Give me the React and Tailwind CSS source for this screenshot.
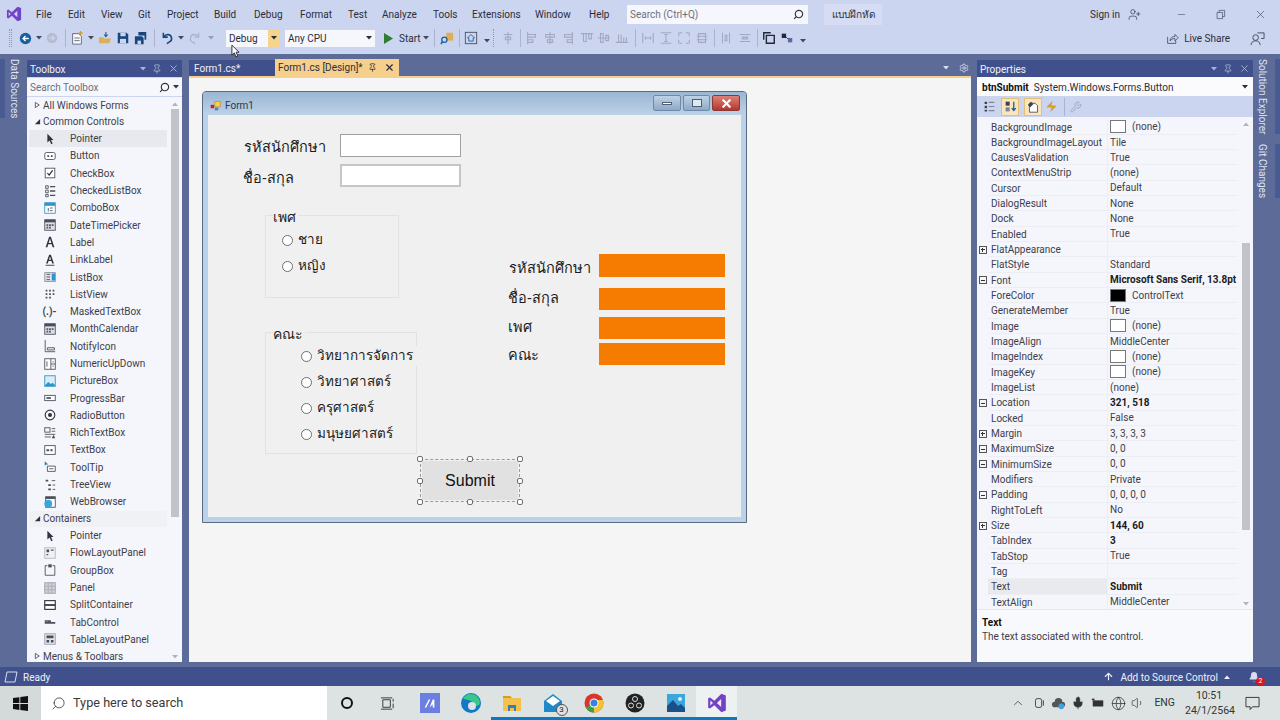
import {
  ArrowUp, Bell, ChevronUp, Globe, Mic, Minus, Pin, Search, Settings, UserPlus, Volume1, Wrench, X, Zap,
} from "lucide-react"

const thai = "font-['Liberation_Sans','Noto_Sans','DejaVu_Sans',sans-serif]"

const menus = [
  ["File", 32], ["Edit", 33], ["View", 37], ["Git", 29], ["Project", 47], ["Build", 40], ["Debug", 46],
  ["Format", 48], ["Test", 34], ["Analyze", 51], ["Tools", 39], ["Extensions", 63], ["Window", 54], ["Help", 38],
]

const commonControls = [
  "Pointer", "Button", "CheckBox", "CheckedListBox", "ComboBox", "DateTimePicker", "Label", "LinkLabel", "ListBox",
  "ListView", "MaskedTextBox", "MonthCalendar", "NotifyIcon", "NumericUpDown", "PictureBox", "ProgressBar",
  "RadioButton", "RichTextBox", "TextBox", "ToolTip", "TreeView", "WebBrowser",
]

const containers = ["Pointer", "FlowLayoutPanel", "GroupBox", "Panel", "SplitContainer", "TabControl", "TableLayoutPanel"]

const props = [
  { n: "BackgroundImage", v: "(none)", swatch: "white" },
  { n: "BackgroundImageLayout", v: "Tile" },
  { n: "CausesValidation", v: "True" },
  { n: "ContextMenuStrip", v: "(none)" },
  { n: "Cursor", v: "Default" },
  { n: "DialogResult", v: "None" },
  { n: "Dock", v: "None" },
  { n: "Enabled", v: "True" },
  { n: "FlatAppearance", v: "", plus: true },
  { n: "FlatStyle", v: "Standard" },
  { n: "Font", v: "Microsoft Sans Serif, 13.8pt", bold: true, minus: true },
  { n: "ForeColor", v: "ControlText", swatch: "black" },
  { n: "GenerateMember", v: "True" },
  { n: "Image", v: "(none)", swatch: "white" },
  { n: "ImageAlign", v: "MiddleCenter" },
  { n: "ImageIndex", v: "(none)", swatch: "white" },
  { n: "ImageKey", v: "(none)", swatch: "white" },
  { n: "ImageList", v: "(none)" },
  { n: "Location", v: "321, 518", bold: true, minus: true },
  { n: "Locked", v: "False" },
  { n: "Margin", v: "3, 3, 3, 3", plus: true },
  { n: "MaximumSize", v: "0, 0", minus: true },
  { n: "MinimumSize", v: "0, 0", minus: true },
  { n: "Modifiers", v: "Private" },
  { n: "Padding", v: "0, 0, 0, 0", minus: true },
  { n: "RightToLeft", v: "No" },
  { n: "Size", v: "144, 60", bold: true, plus: true },
  { n: "TabIndex", v: "3", bold: true },
  { n: "TabStop", v: "True" },
  { n: "Tag", v: "" },
  { n: "Text", v: "Submit", bold: true, selected: true },
  { n: "TextAlign", v: "MiddleCenter" },
]

function Svg({ children, size = 14, className = "" }) {
  return (
    <svg viewBox="0 0 16 16" width={size} height={size} className={className}>
      {children}
    </svg>
  )
}

function Caret({ className = "" }) {
  return (
    <svg viewBox="0 0 6 4" width="6" height="4" className={className}>
      <path d="M0 0h6L3 3.5z" fill="currentColor" />
    </svg>
  )
}

function VsLogo({ size = 16 }) {
  return (
    <svg viewBox="0 0 24 24" width={size} height={size}>
      <path
        d="M17.3 1 8.8 9.3 3.6 5.3 1.4 6.4v11.2l2.2 1.1 5.2-4L17.3 23l5.3-2.1V3.1zM4 15V9l3.2 3zm13 1.8L11.9 12 17 7.2z"
        fill="#7442c8"
      />
    </svg>
  )
}

function ToolIcon({ name }) {
  const c = "#4a4f5c"
  switch (name) {
    case "Pointer":
      return <Svg><path d="M5 2v10l2.6-2.4L9.4 14l1.6-.8-1.8-4H12z" fill="#2f3340" /></Svg>
    case "Button":
      return <Svg><rect x="2" y="4" width="12" height="8" rx="2" fill="#fff" stroke={c} /><path d="M5 7h2v2H5zM9 6v3h2V7H9z" fill={c} /></Svg>
    case "CheckBox":
      return <Svg><rect x="2.5" y="2.5" width="11" height="11" fill="#fff" stroke={c} /><path d="m5 8 2 2.5L11 5" fill="none" stroke="#222" strokeWidth="1.3" /></Svg>
    case "CheckedListBox":
      return <Svg><path d="M3 2h3v3H3zM3 7h3v3H3zM3 12h3v2.5H3z" fill="none" stroke={c} /><path d="M8 3h6M8 8h6M8 13h6" stroke={c} strokeWidth="1.5" /></Svg>
    case "ComboBox":
      return <Svg><rect x="2" y="2" width="12" height="12" fill="#fff" stroke="#2f95c9" /><path d="M2 2h12v3.5H2z" fill="#2f95c9" /><path d="M6 8v4M8 8h3M8 11h3" stroke={c} /></Svg>
    case "DateTimePicker":
    case "MonthCalendar":
      return <Svg><rect x="2" y="2" width="12" height="12" fill="#dfe1e8" stroke={c} /><path d="M2 2h12v3H2z" fill={c} /><path d="M4 7h2v2H4zM7 7h2v2H7zM10 7h2v2h-2zM4 10h2v2H4zM7 10h2v2H7z" fill={c} /></Svg>
    case "Label":
      return <Svg><path d="M3 14 7 2h2l4 12h-2l-1-3.4H6L5 14zm3.5-5h3L8 4z" fill="#30343f" /></Svg>
    case "LinkLabel":
      return <Svg><path d="M3.5 12 7 2h2l3.5 10h-2l-.8-2.8H6.3L5.500 12zm3.300-4.300h2.400L8 4z" fill="#30343f" /><path d="M3 14h10" stroke="#30343f" /></Svg>
    case "ListBox":
      return <Svg><rect x="2" y="3" width="12" height="10" fill="#dfe1e8" stroke="#8b8f9c" /><path d="M4 5h4M4 8h4M4 11h4" stroke={c} /><path d="M10 4h4v8h-4z" fill="#2f95c9" /></Svg>
    case "ListView":
      return <Svg><path d="M3 3h2v2H3zM7 3h2v2H7zM11 3h2v2h-2zM3 7h2v2H3zM7 7h2v2H7zM11 7h2v2h-2zM3 11h2v2H3zM7 11h2v2H7z" fill={c} /></Svg>
    case "MaskedTextBox":
      return <span className="text-[10px] leading-none font-bold text-[#3c404c]">(.)-</span>
    case "NotifyIcon":
      return <Svg><path d="M2.5 1v13.5H14M5 10h8v2.5H5z" fill="none" stroke={c} /></Svg>
    case "NumericUpDown":
      return <Svg><rect x="2" y="2" width="12" height="12" fill="#fff" stroke={c} /><path d="M9 2v12M9 8h5M4.5 5v6" stroke={c} /><path d="m10.5 6 1-1.5 1 1.5zM10.5 10l1 1.5 1-1.5z" fill={c} /></Svg>
    case "PictureBox":
      return <Svg><rect x="2" y="2" width="12" height="12" fill="#d9edf8" stroke="#2f95c9" /><path d="m2 13 4-4 3 2.5 2-1.5 3 3v1H2z" fill="#2f95c9" /></Svg>
    case "ProgressBar":
      return <Svg><rect x="2" y="5" width="12" height="6" fill="#fff" stroke={c} /><path d="M4 7h5v2H4z" fill={c} /></Svg>
    case "RadioButton":
      return <Svg><circle cx="8" cy="8" r="5.5" fill="none" stroke="#30343f" strokeWidth="1.3" /><circle cx="8" cy="8" r="2.3" fill="#30343f" /></Svg>
    case "RichTextBox":
      return <Svg><rect x="2" y="2" width="6" height="5" fill="none" stroke={c} /><path d="M10 3h4M10 6h4M2 9.5h12M2 12.5h7" stroke={c} /><path d="m10 14 2-4 2 4z" fill={c} /></Svg>
    case "TextBox":
      return <Svg><rect x="2" y="3" width="12" height="10" fill="#fff" stroke={c} /><path d="M4 7h3v2.5H4zM8.5 6v3.5H11V7H8.5z" fill={c} /></Svg>
    case "ToolTip":
      return <Svg><path d="M2 1.5v5L3.500 5H6z" fill="#1b7fb5" /><path d="M5 7h9v6H5z" fill="#fff" stroke={c} /><path d="M7 10h5" stroke={c} /></Svg>
    case "TreeView":
      return <Svg><path d="M3 2h3v2H3zM6 7h3v2H6zM6 12h3v2H6z" fill={c} /><path d="M10 3h4M11 8h3M11 13h3" stroke={c} /></Svg>
    case "WebBrowser":
      return <Svg><rect x="3" y="2" width="11" height="12" fill="#fff" stroke={c} /><path d="M3 2h11v2.5H3z" fill={c} /><circle cx="6" cy="10" r="4.5" fill="#39a6dc" /></Svg>
    case "FlowLayoutPanel":
      return <Svg><rect x="2" y="2" width="12" height="12" fill="#eef0f4" stroke="#b3b6c0" /><path d="M4 4h3v3H4zM9 4h3v1.5H9zM4 9h2v1.5H4z" fill={c} /></Svg>
    case "GroupBox":
      return <Svg><path d="M5 3H2.5v11h11V3H11" fill="none" stroke={c} /><path d="M6 1.5h4V5H6z" fill={c} /></Svg>
    case "Panel":
      return <Svg><rect x="2" y="2" width="12" height="12" fill="#cfd1d8" stroke="#9a9da8" /><path d="M2 6h12M2 10h12M6 2v12M10 2v12" stroke="#a9acb6" /></Svg>
    case "SplitContainer":
      return <Svg><rect x="2" y="3" width="12" height="10" fill="#fff" stroke="#30343f" strokeWidth="1.3" /><path d="M2 7h12v2H2z" fill="#30343f" /></Svg>
    case "TabControl":
      return <Svg><path d="M2 6h7v2h5v2H2z" fill={c} /><path d="M3 7h3v1H3z" fill="#2f95c9" /></Svg>
    default:
      return <Svg><rect x="2" y="2" width="12" height="12" fill="#e3e5ea" stroke="#9a9da8" /><path d="M4 4h8v3H4zM4 9h3v3H4zM9 9h3v3H9z" fill={c} /></Svg>
  }
}

function GrayIcon({ d }) {
  return <Svg><path d={d} fill="none" stroke="#a3a8be" strokeWidth="1.2" /></Svg>
}

function Grip() {
  return <div className="w-[3px] h-[18px] border-x border-dotted border-[#8f97b3]" />
}

function Sep({ className = "" }) {
  return <div className={`w-px h-[18px] bg-[#aab3d0] ${className}`} />
}

function Slot({ className = "", children }) {
  return <div className={`w-[14px] h-[14px] flex items-center justify-center shrink-0 ${className}`}>{children}</div>
}

function DropSlot({ className = "" }) {
  return (
    <div className={`w-[10px] flex justify-center shrink-0 text-[#444a5c] ${className}`}>
      <Caret />
    </div>
  )
}

function TitleBar() {
  return (
    <div className="h-[27px] flex items-center bg-[#ccd5f0] text-[#2a2d38] text-[10px] shrink-0 pt-px">
      <div className="w-[28px] pl-[6px] shrink-0">
        <VsLogo />
      </div>
      <div className="flex items-center w-[599px] shrink-0 pl-[8px] pt-px">
        {menus.map(([label, w]) => (
          <div key={label} className="shrink-0" style={{ width: w }}>
            {label}
          </div>
        ))}
      </div>
      <div className="w-[181px] h-[19px] bg-[#f6f7fc] flex items-center justify-between px-[3px] text-[#6d7180] shrink-0">
        <span>Search (Ctrl+Q)</span>
        <Search size={11} strokeWidth={2.5} className="text-[#30343f] mr-[1px] -scale-x-100" />
      </div>
      <div className={`ml-[16px] w-[58px] h-[21px] flex items-center justify-center bg-[#d5dcf3] shrink-0 ${thai}`}>
        แบบฝึกหัด
      </div>
      <div className="ml-auto flex items-center">
        <span>Sign in</span>
        <UserPlus size={13} strokeWidth={1.2} className="ml-[8px]" />
        <Minus size={11} strokeWidth={1} className="ml-[35px]" />
        <Svg size={11} className="ml-[28px]"><path d="M3 5h8v9H3zM6 5V2h8v9h-3" fill="none" stroke="#444a5c" /></Svg>
        <X size={13} strokeWidth={1} className="ml-[28px] mr-[13px]" />
      </div>
    </div>
  )
}

function Toolbar() {
  return (
    <div className="h-[27px] flex items-center bg-[#ccd5f0] text-[#2a2d38] text-[10px] shrink-0 pb-[5px]">
      <div className="ml-[9px] mr-[5px]"><Grip /></div>
      <Slot className="ml-[1px]">
        <Svg size={13}><circle cx="8" cy="8" r="7" fill="#1b5e9e" /><path d="M12 8H6M8 5 5 8l3 3" fill="none" stroke="#fff" strokeWidth="1.6" /></Svg>
      </Slot>
      <DropSlot className="ml-[2px]" />
      <Slot className="ml-px">
        <Svg size={12}><circle cx="8" cy="8" r="7" fill="#b6bdd2" /><path d="M4 8h6M8 5l3 3-3 3" fill="none" stroke="#ccd5f0" strokeWidth="1.5" /></Svg>
      </Slot>
      <Sep className="ml-[6px]" />
      <Slot className="ml-[4px]">
        <Svg><path d="M3 3h7l3 3v9H3z" fill="#f8f9fd" stroke="#5a6070" /><path d="M12 0v5M9.5 2.5h5" stroke="#c79a2b" strokeWidth="1.3" /><path d="M5 8h6M5 11h6" stroke="#5a6070" /></Svg>
      </Slot>
      <DropSlot className="ml-[2px]" />
      <Slot className="ml-[2px]">
        <Svg><path d="M1 7h5l1 1.5h8L13 14H1z" fill="#dcb05a" /><path d="M9 1v5M7 4l2 2.5L11 4" fill="none" stroke="#1b5e9e" strokeWidth="1.3" /></Svg>
      </Slot>
      <Slot className="ml-[4px]">
        <Svg><path d="M2 2h10l2 2v10H2z" fill="#17477e" /><path d="M5 2h6v4H5z" fill="#ccd5f0" /><path d="M4.5 9h7v5h-7z" fill="#ccd5f0" /></Svg>
      </Slot>
      <Slot className="ml-[4px]">
        <Svg><path d="M5 1h9v9h-2V5H5z" fill="#17477e" /><path d="M1 6h8l2 2v7H1z" fill="#17477e" /><path d="M4 11h4v4H4z" fill="#ccd5f0" /></Svg>
      </Slot>
      <Sep className="ml-[6px]" />
      <Slot className="ml-[4px]">
        <Svg><path d="M5 2v5h5M5 7c1.5-2 3-3 5-3a4.5 4.5 0 0 1 1.5 8.7L9 14.5" fill="none" stroke="#17477e" strokeWidth="1.8" /></Svg>
      </Slot>
      <DropSlot className="ml-[3px]" />
      <Slot className="ml-[3px]">
        <Svg><path d="M11 2v5H6M11 7C9.5 5 8 4 6 4a4.5 4.5 0 0 0-1.5 8.7L7 14.5" fill="none" stroke="#aeb4c8" strokeWidth="1.5" /></Svg>
      </Slot>
      <DropSlot className="ml-[3px] opacity-40" />

      {/* solution config dropdowns */}
      <div className="ml-[10px] w-[53px] h-[17px] flex bg-[#f6f7fc] shrink-0">
        <span className="flex-1 pl-[3px] leading-[17px]">Debug</span>
        <div className="w-[11px] bg-[#f5d48d] flex items-center justify-center">
          <Caret />
        </div>
      </div>
      <div className="ml-[6px] w-[90px] h-[17px] flex items-center justify-between bg-[#f6f7fc] px-[3px] shrink-0">
        <span>Any CPU</span>
        <Caret />
      </div>
      <Slot className="ml-[6px]">
        <svg viewBox="0 0 10 12" width="9" height="11"><path d="M0 0l10 6-10 6z" fill="#2f7d32" /></svg>
      </Slot>
      <span className="ml-[4px] w-[21px] shrink-0">Start</span>
      <DropSlot className="ml-px" />
      <Sep className="ml-[3px]" />
      <Slot className="ml-[5px]">
        <Svg><path d="M7 2h8v9H7z" fill="#dcb05a" /><circle cx="5" cy="10" r="3" fill="#ccd5f0" stroke="#1b5e9e" strokeWidth="1.4" /><path d="m3 12-2 3" stroke="#1b5e9e" strokeWidth="1.6" /></Svg>
      </Slot>
      <Sep className="ml-[5px]" />
      <Slot className="ml-[4px]">
        <Svg><rect x="1.5" y="1.5" width="13" height="13" fill="none" stroke="#444a5c" /><path d="M8 4 4 8h1.5v3.5h5V8H12z" fill="none" stroke="#1b5e9e" /></Svg>
      </Slot>
      <DropSlot className="ml-[4px] mt-[6px]" />
      <div className="ml-px"><div className="w-[2px] h-[18px] border-l border-dotted border-[#8f97b3]" /></div>

      <Slot className="ml-[6px]"><GrayIcon d="M3 4h10M8 1v14M5 7h6v3H5z" /></Slot>
      <Sep className="ml-[5px]" />
      <Slot className="ml-[4px]"><GrayIcon d="M3 1v14M3 4h9v3H3zM3 10h6v3H3z" /></Slot>
      <Slot className="ml-[4px]"><GrayIcon d="M8 1v14M3 4h10v3H3zM5 10h6v3H5z" /></Slot>
      <Slot className="ml-[4px]"><GrayIcon d="M13 1v14M4 4h9v3H4zM7 10h6v3H7z" /></Slot>
      <Slot className="ml-[5px]"><GrayIcon d="M1 3h14M4 3v9h3V3M10 3v6h3V3" /></Slot>
      <Slot className="ml-[3px]"><GrayIcon d="M1 8h14M4 3v10h3V3zM10 5v6h3V5z" /></Slot>
      <Slot className="ml-[4px]"><GrayIcon d="M1 13h14M4 4v9h3V4M10 7v6h3V7" /></Slot>
      <Sep className="ml-[6px]" />
      <Slot className="ml-[5px]"><GrayIcon d="M2 2v12M14 2v12M5 8h6M5 6v4M11 6v4" /></Slot>
      <Slot className="ml-[4px]"><GrayIcon d="M2 2h12M2 14h12M8 4v8M6 4h4M6 12h4" /></Slot>
      <Slot className="ml-[4px]"><GrayIcon d="M2 2h4M2 2v4M14 2h-4M14 2v4M2 14h4M2 14v-4M14 14h-4M14 14v-4" /></Slot>
      <Slot className="ml-[4px]"><GrayIcon d="M4 3h8v10H4zM2 6h12M2 10h12" /></Slot>
      <Sep className="ml-[5px]" />
      <Slot className="ml-[4px]"><GrayIcon d="M4 2v12M12 2v12M7 5h2v6H7z" /></Slot>
      <Slot className="ml-[5px]"><GrayIcon d="M2 4h12M2 12h12M5 7h6v2H5z" /></Slot>
      <Sep className="ml-[5px]" />
      <Slot className="ml-[4px]">
        <Svg><path d="M5 5h9v9H5z" fill="none" stroke="#22273a" strokeWidth="1.6" /><path d="M2 10V2h8" fill="none" stroke="#22273a" strokeWidth="1.6" /></Svg>
      </Slot>
      <Slot className="ml-[4px]">
        <Svg><path d="M2 3h5v5H2z" fill="#22273a" /><path d="M9 8h5v5H9z" fill="#5a6d9a" /><path d="M7 7l2 2" stroke="#22273a" /></Svg>
      </Slot>
      <DropSlot className="ml-[4px] mt-[6px]" />

      <div className="ml-auto flex items-center">
        <Svg size={13}><path d="M2 6v8h10v-3" fill="none" stroke="#444a5c" /><path d="M5 11c0-4 3-5.500 6-5.500V3l4 4-4 4V8c-2.500 0-4.500 1-6 3z" fill="none" stroke="#444a5c" /></Svg>
        <span className="ml-[5px]">Live Share</span>
        <Svg size={15} className="ml-[20px] mr-[15px]"><circle cx="6" cy="7" r="3" fill="none" stroke="#444a5c" /><path d="M1 15c.5-3 2-4.500 5-4.500s4 1 5 4.500M8 2h7v6h-3" fill="none" stroke="#444a5c" /></Svg>
      </div>
    </div>
  )
}

function PanelHeader({ title }) {
  return (
    <div className="h-[17px] shrink-0 flex items-center bg-[#40508d] text-[#eef0f8] text-[10px] pl-[3px]">
      <span className="pt-[2px]">{title}</span>
      <div className="ml-auto flex items-center text-[#aab4d6]">
        <Caret />
        <Pin size={10} className="ml-[6px]" />
        <X size={11} className="ml-[6px] mr-[3px]" />
      </div>
    </div>
  )
}

function ScrollBar({ thumb }) {
  return (
    <div className="w-[15px] shrink-0 flex flex-col items-center bg-[#f5f6fb] text-[#b0b3bd] pt-[5px] pb-[3px]">
      <Caret className="rotate-180 shrink-0" />
      {thumb}
      <Caret className="mt-auto shrink-0" />
    </div>
  )
}

function ToolRow({ name, selected }) {
  return (
    <div className={`h-[17.3px] flex items-center ${selected ? "bg-[#e8e9ef]" : ""}`}>
      <div className="w-[41px] flex justify-center shrink-0">
        <div className="w-[14px] h-[14px] flex items-center justify-center">
          <ToolIcon name={name} />
        </div>
      </div>
      <span>{name}</span>
    </div>
  )
}

function GroupRow({ open, label, shade }) {
  return (
    <div className={`h-[16.5px] flex items-center pl-[5px] ${shade ? "bg-[#f0f1f5]" : ""}`}>
      {open ? (
        <svg viewBox="0 0 8 8" width="7" height="7"><path d="M7 1v6H1z" fill="#30343f" /></svg>
      ) : (
        <svg viewBox="0 0 8 8" width="7" height="8"><path d="M1.5 1v6L6 4z" fill="none" stroke="#555" /></svg>
      )}
      <span className="ml-[2px]">{label}</span>
    </div>
  )
}

function Toolbox() {
  return (
    <div className="w-[155px] shrink-0 mt-px flex flex-col bg-[#f5f6fb]">
      <PanelHeader title="Toolbox" />
      <div className="h-[20px] shrink-0 flex items-center bg-[#ccd5f0] py-px">
        <div className="w-full h-full bg-[#f6f7fc] flex items-center justify-between px-[3px] text-[10px] text-[#6d7180]">
          <span className="pt-px">Search Toolbox</span>
          <span className="flex items-center gap-[3px] text-[#30343f]">
            <Search size={11} strokeWidth={2.5} className="-scale-x-100" />
            <Caret />
          </span>
        </div>
      </div>
      <div className="flex-1 min-h-0 flex overflow-hidden text-[10px] text-[#3d404b]">
        <div className="flex-1 min-w-0 pl-[2px]">
          <GroupRow label="All Windows Forms" />
          <GroupRow open label="Common Controls" />
          {commonControls.map((name, i) => (
            <ToolRow key={name} name={name} selected={i === 0} />
          ))}
          <GroupRow open shade label="Containers" />
          {containers.map(name => (
            <ToolRow key={name} name={name} />
          ))}
          <GroupRow label="Menus & Toolbars" />
        </div>
        <ScrollBar thumb={<div className="w-[8px] h-[408px] bg-[#c2c3c9] mt-[3px] shrink-0" />} />
      </div>
    </div>
  )
}

function FormLabel({ className, children }) {
  return (
    <div className={`absolute h-[20px] leading-[20px] text-[14.5px] text-[#1c1c1c] whitespace-nowrap ${className}`}>
      {children}
    </div>
  )
}

function Radio({ className, label }) {
  return (
    <div className={`absolute h-[20px] flex items-center gap-[5px] bg-[#f0f0f0] text-[13.5px] text-[#1c1c1c] whitespace-nowrap ${className}`}>
      <span className="w-[11px] h-[11px] rounded-full bg-white border border-[#6f6f6f] shrink-0" />
      <span className="pt-px">{label}</span>
    </div>
  )
}

function Handle({ className }) {
  return <div className={`absolute w-[6px] h-[6px] rounded-[2px] bg-white border border-[#6f6f6f] ${className}`} />
}

function GroupFrame({ className, legend }) {
  return (
    <div className={`absolute border border-[#e2e2e2] ${className}`}>
      <div className="absolute left-[7px] -top-[9px] h-[20px] leading-[20px] bg-[#f0f0f0] pr-[2px] text-[14px] text-[#1c1c1c]">
        {legend}
      </div>
    </div>
  )
}

function DesignerForm() {
  return (
    <div className="w-[545px] h-[432px] flex flex-col border border-[#5e6b7c] rounded-t-[4px] bg-[#b9d1ea]">
      <div className="h-[23px] shrink-0 flex items-center pl-[7px] pr-[6px] pt-[3px] rounded-t-[3px] bg-gradient-to-b from-[#9bb6d3] to-[#bdd2e8]">
        <Svg size={11}>
          <path d="M7 2h8v8H7z" fill="#f6d04d" stroke="#b08a20" />
          <path d="M1 7h5v5H1z" fill="#c8202a" />
          <path d="M7 11h5v4H7z" fill="#4f7fc0" />
        </Svg>
        <span className="ml-[4px] text-[10px] text-[#2e3744]">Form1</span>
        <div className="ml-auto flex items-start gap-[2px] -mt-[4px]">
          <div className="w-[28px] h-[16px] rounded-[2px] border border-[#6e8aa8] bg-gradient-to-b from-[#bed2e6] to-[#8faac6] flex items-center justify-center">
            <div className="w-[10px] h-[3px] bg-white border border-[#4f5f72]" />
          </div>
          <div className="w-[27px] h-[16px] rounded-[2px] border border-[#6e8aa8] bg-gradient-to-b from-[#bed2e6] to-[#8faac6] flex items-center justify-center">
            <div className="w-[10px] h-[8px] bg-[#dfe8f2] border border-[#4f5f72]" />
          </div>
          <div className="w-[28px] h-[16px] rounded-[2px] border border-[#8a3a36] bg-gradient-to-b from-[#dc8077] to-[#b8332a] flex items-center justify-center">
            <X size={13} strokeWidth={4} className="text-white" />
          </div>
        </div>
      </div>

      <div className="flex-1 min-h-0 px-[5px] pb-[5px] flex">
        {/* controls sit where the designer dropped them */}
        <div className={`relative flex-1 bg-[#f0f0f0] ${thai}`}>
          <FormLabel className="left-[36px] top-[22px]">รหัสนักศึกษา</FormLabel>
          <FormLabel className="left-[35px] top-[53px]">ชื่อ-สกุล</FormLabel>
          <div className="absolute left-[132px] top-[19px] w-[121px] h-[23px] bg-white border border-[#a0a0a0]" />
          <div className="absolute left-[132px] top-[49px] w-[121px] h-[23px] bg-white border-2 border-[#c6c6c6]" />

          <GroupFrame className="left-[57px] top-[100px] w-[134px] h-[83px]" legend="เพศ" />
          <Radio className="left-[74px] top-[115px]" label="ชาย" />
          <Radio className="left-[74px] top-[141px]" label="หญิง" />

          <GroupFrame className="left-[57px] top-[217px] w-[152px] h-[122px]" legend="คณะ" />
          <Radio className="left-[93px] top-[231px] w-[118px]" label="วิทยาการจัดการ" />
          <Radio className="left-[93px] top-[257px]" label="วิทยาศาสตร์" />
          <Radio className="left-[93px] top-[283px]" label="ครุศาสตร์" />
          <Radio className="left-[93px] top-[309px]" label="มนุษยศาสตร์" />

          <FormLabel className="left-[301px] top-[143px]">รหัสนักศึกษา</FormLabel>
          <FormLabel className="left-[300px] top-[173px]">ชื่อ-สกุล</FormLabel>
          <FormLabel className="left-[300px] top-[202px]">เพศ</FormLabel>
          <FormLabel className="left-[300px] top-[230px]">คณะ</FormLabel>
          <div className="absolute left-[391px] top-[139px] w-[126px] h-[23px] bg-[#f57c00]" />
          <div className="absolute left-[391px] top-[173px] w-[126px] h-[22px] bg-[#f57c00]" />
          <div className="absolute left-[391px] top-[202px] w-[126px] h-[22px] bg-[#f57c00]" />
          <div className="absolute left-[391px] top-[228px] w-[126px] h-[22px] bg-[#f57c00]" />

          <div className="absolute left-[212px] top-[344px] w-[100px] h-[43px] border border-dashed border-[#9a9a9a] flex items-center justify-center">
            <div className="w-[96px] h-[39px] bg-[#e1e1e1] flex items-center justify-center font-['Liberation_Sans',sans-serif] text-[16px] text-[#111]">
              Submit
            </div>
            <Handle className="-left-[4px] -top-[4px]" />
            <Handle className="left-[46px] -top-[4px]" />
            <Handle className="-right-[4px] -top-[4px]" />
            <Handle className="-left-[4px] top-[18px]" />
            <Handle className="-right-[4px] top-[18px]" />
            <Handle className="-left-[4px] -bottom-[4px]" />
            <Handle className="left-[46px] -bottom-[4px]" />
            <Handle className="-right-[4px] -bottom-[4px]" />
          </div>
        </div>
      </div>
    </div>
  )
}

function DocumentArea() {
  return (
    <div className="w-[782px] shrink-0 ml-[7px] flex flex-col">
      <div className="h-[17px] shrink-0 flex items-end text-[10px] whitespace-nowrap">
        <div className="w-[86px] h-[16px] bg-[#40508d] text-[#eef0f8] pl-[5px] leading-[17px]">Form1.cs*</div>
        <div className="w-[124px] h-[17px] bg-[#f6cf8c] text-[#2a2d38] flex items-center pl-[3px]">
          <span>Form1.cs [Design]*</span>
          <Pin size={9} className="ml-auto" />
          <X size={11} strokeWidth={2.5} className="ml-[7px] mr-[4px]" />
        </div>
        <div className="ml-auto self-center flex items-center text-[#d7dcee]">
          <Caret />
          <Settings size={10} className="ml-[10px] mr-[2px]" />
        </div>
      </div>
      <div className="h-[2px] shrink-0 bg-[#f6cf8c]" />
      <div className="flex-1 min-h-0 bg-[#f5f5f5] pl-[13px] pt-[13px]">
        <DesignerForm />
      </div>
    </div>
  )
}

function PlusBox({ open }) {
  return (
    <div className="w-[8px] h-[8px] border border-[#555] flex items-center justify-center relative">
      <div className="w-[4px] h-px bg-[#333]" />
      {open && <div className="absolute w-px h-[4px] bg-[#333]" />}
    </div>
  )
}

function PropRow({ p }) {
  return (
    <div className="h-[15.33px] flex items-center">
      <div className="w-[11px] h-full shrink-0 flex items-center justify-center">
        {(p.plus || p.minus) && <PlusBox open={p.plus} />}
      </div>
      <div className={`w-[120px] h-full shrink-0 pl-[3px] leading-[15px] border-b border-r border-[#eceef4] whitespace-nowrap ${p.selected ? "bg-[#e9eaee]" : ""}`}>
        {p.n}
      </div>
      <div className={`flex-1 min-w-0 h-full flex items-center pl-[2px] border-b border-[#eceef4] whitespace-nowrap ${p.bold ? "font-bold text-[#1c1c1c]" : ""}`}>
        {p.swatch && (
          <span className={`w-[16px] h-[13px] mr-[6px] shrink-0 border border-[#777] ${p.swatch === "black" ? "bg-black" : "bg-white"}`} />
        )}
        {p.v}
      </div>
    </div>
  )
}

function Properties() {
  return (
    <div className="w-[276px] shrink-0 ml-[6px] mt-px flex flex-col bg-[#f5f6fb]">
      <PanelHeader title="Properties" />
      <div className="h-[19px] shrink-0 bg-[#fbfbfe] flex items-center px-[5px] pt-px text-[10px] text-[#2a2d38]">
        <span className="font-bold text-[#111]">btnSubmit</span>
        <span className="ml-[5px]">System.Windows.Forms.Button</span>
        <Caret className="ml-auto" />
      </div>
      <div className="h-[21px] shrink-0 bg-[#ccd5f0] flex items-center pl-[5px]">
        <Slot>
          <Svg size={13}><path d="M2 2h3v3H2zM2 7h3v3H2zM2 12h3v2H2z" fill="#3e4250" /><path d="M7 3h7M7 8h7M7 13h7" stroke="#7e8496" strokeWidth="1.5" /></Svg>
        </Slot>
        <div className="ml-[5px] w-[18px] h-[18px] bg-[#f9e6bf] border border-[#e3c078] flex items-center justify-center">
          <Svg size={13}><path d="M2 2h5v5H2z" fill="#3e4250" /><path d="M2 9h5v5H2z" fill="#7e8496" /><path d="M12 2v11M9.5 10l2.5 3 2.5-3" fill="none" stroke="#1b5e9e" strokeWidth="1.6" /></Svg>
        </div>
        <div className="ml-[5px] w-[18px] h-[18px] bg-[#f9e6bf] border border-[#e3c078] flex items-center justify-center">
          <Svg size={13}><path d="M3 4h7l3 3v8H3z" fill="#fff" stroke="#3e4250" /><path d="M1 6l4-4 3 3-4 4z" fill="#3e4250" /></Svg>
        </div>
        <Zap size={13} fill="#d9a227" strokeWidth={0} className="ml-[3px]" />
        <Sep className="ml-[6px]" />
        <Wrench size={12} className="ml-[5px] text-[#a3a8be]" />
      </div>
      <div className="flex-1 min-h-0 flex overflow-hidden text-[10px] text-[#3d404b]">
        <div className="flex-1 min-w-0 pt-[2.5px] overflow-hidden">
          {props.map(p => (
            <PropRow key={p.n} p={p} />
          ))}
        </div>
        <ScrollBar thumb={<div className="w-[8px] h-[287px] bg-[#c2c3c9] mt-[117px] shrink-0" />} />
      </div>
      <div className="h-[53px] shrink-0 bg-[#f8f9fd] border-t border-[#e6e8f0] px-[5px] pt-[6px] text-[10px] text-[#3d404b]">
        <div className="font-bold text-[#111] leading-[14px]">Text</div>
        <div className="leading-[14px]">The text associated with the control.</div>
      </div>
    </div>
  )
}

function StatusBar() {
  return (
    <div className="h-[19px] shrink-0 bg-[#40508d] text-[#eef0f8] text-[10px] flex items-center pl-[4px]">
      <svg viewBox="0 0 14 12" width="14" height="12"><path d="M3 1h10l-2 10H1z" fill="none" stroke="#d7dcee" /></svg>
      <span className="ml-[5px] pt-[2px]">Ready</span>
      <div className="ml-auto flex items-center">
        <ArrowUp size={11} strokeWidth={2.5} />
        <span className="ml-[6px] pt-[2px]">Add to Source Control</span>
        <Caret className="ml-[6px] rotate-180" />
        <div className="relative ml-[18px] mr-[20px]">
          <Bell size={12} fill="#d7dcee" strokeWidth={0} />
          <span className="absolute -right-[5px] -bottom-[3px] w-[9px] h-[9px] rounded-full bg-[#d8151b] text-white text-[7px] leading-[9px] text-center">2</span>
        </div>
      </div>
    </div>
  )
}

function TaskIcon({ active, on, className = "", children }) {
  return (
    <div className={`w-[41px] h-full flex items-center justify-center relative shrink-0 ${active ? "bg-[#eef1f1]" : ""} ${className}`}>
      {children}
      {on && <div className="absolute bottom-0 left-0 right-0 h-[3px] bg-[#0a78c2]" />}
    </div>
  )
}

function Taskbar() {
  return (
    <div className="h-[34px] shrink-0 bg-[#dde3e2] flex items-stretch text-[#222]">
      <div className="w-[41px] bg-[#d3dad9] flex items-center justify-center shrink-0">
        <svg viewBox="0 0 16 16" width="15" height="15">
          <path d="M0 2.2 6.8 1.2v6.300H0zM7.800 1 16 0v7.500H7.800zM0 8.500h6.800v6.300L0 13.800zM7.800 8.500H16V16l-8.200-1.100z" fill="#111" />
        </svg>
      </div>
      <div className="w-[286px] bg-white flex items-center pl-[10px] text-[12.7px] text-[#3a3a3a] shrink-0">
        <Search size={15} strokeWidth={1.3} className="-scale-x-100" />
        <span className="ml-[7px]">Type here to search</span>
      </div>
      <div className="w-[40px] flex items-center justify-center shrink-0">
        <div className="w-[12px] h-[12px] rounded-full border-2 border-[#111]" />
      </div>
      <div className="w-[40px] flex items-center justify-center shrink-0">
        <Svg size={15}><path d="M3 4h8v8H3zM1 2h12M1 14h12M14 3v3M14 8v5" fill="none" stroke="#333" /></Svg>
      </div>
      <TaskIcon className="ml-[2px]">
        <div className="w-[20px] h-[20px] bg-[#6a7fe0] flex items-center justify-center">
          <Svg size={13}><path d="M2 13 7 3h2L4 13zM8 13l4-10h2v10h-2V9z" fill="#fff" /></Svg>
        </div>
      </TaskIcon>
      <TaskIcon>
        <svg viewBox="0 0 20 20" width="20" height="20">
          <circle cx="10" cy="10" r="10" fill="#1278c8" />
          <path d="M2 6c2-5 8-6 12-4s5 6 5 8c0 2-2 3-5 3-3 0-3-1-2-3-1-3-9-4-10-4z" fill="#37c88a" />
          <circle cx="11" cy="13" r="4" fill="#dde3e2" />
        </svg>
      </TaskIcon>
      <TaskIcon on>
        <svg viewBox="0 0 20 20" width="20" height="20">
          <path d="M1 3h7l2 2h9v13H1z" fill="#f2c14e" />
          <path d="M1 3h7l2 2H1z" fill="#d79b1e" />
          <path d="M6 12h8v6h-2v-3H8v3H6z" fill="#2f7fb8" />
        </svg>
      </TaskIcon>
      <TaskIcon on>
        <div className="relative">
          <svg viewBox="0 0 20 20" width="20" height="20">
            <path d="M1 8 10 1l9 7v11H1z" fill="#1e88c9" />
            <path d="m3 8 7-5 7 5-7 5z" fill="#fff" />
          </svg>
          <span className="absolute -right-[5px] -bottom-[3px] w-[12px] h-[12px] rounded-full bg-[#dde3e2] border border-[#555] text-[8px] leading-[10px] text-center">3</span>
        </div>
      </TaskIcon>
      <TaskIcon on>
        <svg viewBox="0 0 20 20" width="20" height="20">
          <circle cx="10" cy="10" r="9.5" fill="#d9362b" />
          <path d="M10 10 1.800 14.500A9.500 9.500 0 0 0 10 19.500z" fill="#3aa14a" />
          <path d="M10 10v9.500A9.500 9.500 0 0 0 19 7H10z" fill="#f2c230" />
          <circle cx="10" cy="10" r="4.5" fill="#fff" />
          <circle cx="10" cy="10" r="3.5" fill="#3b7fe0" />
        </svg>
      </TaskIcon>
      <TaskIcon on>
        <svg viewBox="0 0 20 20" width="20" height="20">
          <circle cx="10" cy="10" r="9.5" fill="#222" />
          <circle cx="10" cy="6" r="2.5" fill="none" stroke="#ddd" />
          <circle cx="6" cy="12.5" r="2.5" fill="none" stroke="#ddd" />
          <circle cx="14" cy="12.5" r="2.5" fill="none" stroke="#ddd" />
        </svg>
      </TaskIcon>
      <TaskIcon on>
        <svg viewBox="0 0 20 20" width="20" height="20">
          <path d="M1 1h18v18H1z" fill="#39a6dc" />
          <path d="M1 19v-6l6-6 5 6 3-2 4 4v4z" fill="#1a4f8a" />
          <circle cx="14" cy="6" r="2" fill="#d8eef9" />
        </svg>
      </TaskIcon>
      <TaskIcon active on>
        <VsLogo size={20} />
      </TaskIcon>

      <div className="ml-auto flex items-center text-[#333]">
        <ChevronUp size={14} strokeWidth={1.3} />
        <Svg size={14} className="ml-[7px]"><rect x="4" y="3" width="7" height="10" rx="2" fill="none" stroke="#333" /><path d="M13 5v6" stroke="#333" /></Svg>
        <Svg size={15} className="ml-[5px]"><path d="M4 12a3 3 0 0 1 0-6 4 4 0 0 1 8 0 3 3 0 0 1 0 6z" fill="#555" /><circle cx="11" cy="11" r="3" fill="#3aa3e0" /></Svg>
        <Mic size={14} fill="#333" strokeWidth={1.2} className="ml-[5px]" />
        <Svg size={14} className="ml-[6px]"><path d="M2 5h12v7H2z" fill="#333" /><path d="M1 3h3v2H1z" fill="#333" /></Svg>
        <Globe size={15} strokeWidth={1.2} className="ml-[6px]" />
        <Volume1 size={14} strokeWidth={1.2} className="ml-[5px]" />
        <span className="ml-[9px] text-[10.5px]">ENG</span>
        <div className="ml-[10px] w-[48px] text-center text-[10.5px] leading-[15px]">
          <div>10:51</div>
          <div>24/1/2564</div>
        </div>
        <svg viewBox="0 0 16 16" width="15" height="15" className="ml-[12px] mr-[20px]">
          <path d="M1 1.5h14v10H8l-2.500 3v-3H1z" fill="none" stroke="#333" />
        </svg>
      </div>
    </div>
  )
}

function Rail({ side, tabs }) {
  return (
    <div className={`w-[27px] shrink-0 flex flex-col gap-[10px] text-[#dfe3f2] text-[10px] ${side === "left" ? "pl-[7px]" : "items-end"}`}>
      {tabs.map(t => (
        <div key={t} className={`flex ${side === "left" ? "-ml-[7px]" : ""}`}>
          {side === "left" && <div className="w-[5px] bg-[#4a5a92]" />}
          <span className={`[writing-mode:vertical-rl] h-fit ${side === "left" ? "ml-[2px]" : "mr-[5px]"}`}>{t}</span>
          {side === "right" && <div className="w-[5px] bg-[#4a5a92]" />}
        </div>
      ))}
    </div>
  )
}

function App() {
  return (
    <div className="relative w-[1280px] h-[720px] flex flex-col overflow-hidden bg-[#5d6b99] font-['Roboto','Liberation_Sans',sans-serif]">
      <TitleBar />
      <Toolbar />
      <div className="flex-1 min-h-0 flex pt-[5px] pb-[5px]">
        <Rail side="left" tabs={["Data Sources"]} />
        <Toolbox />
        <DocumentArea />
        <Properties />
        <Rail side="right" tabs={["Solution Explorer", "Git Changes"]} />
      </div>
      <StatusBar />
      <Taskbar />

      {/* mouse pointer caught in the recording */}
      <svg viewBox="0 0 10 15" width="9" height="14" className="absolute left-[231px] top-[44px]">
        <path d="M1 1v11l2.700-2.400L5.500 14l2-.9-1.800-4.200H9z" fill="#fff" stroke="#222" strokeWidth="1" />
      </svg>
    </div>
  )
}

export default App
